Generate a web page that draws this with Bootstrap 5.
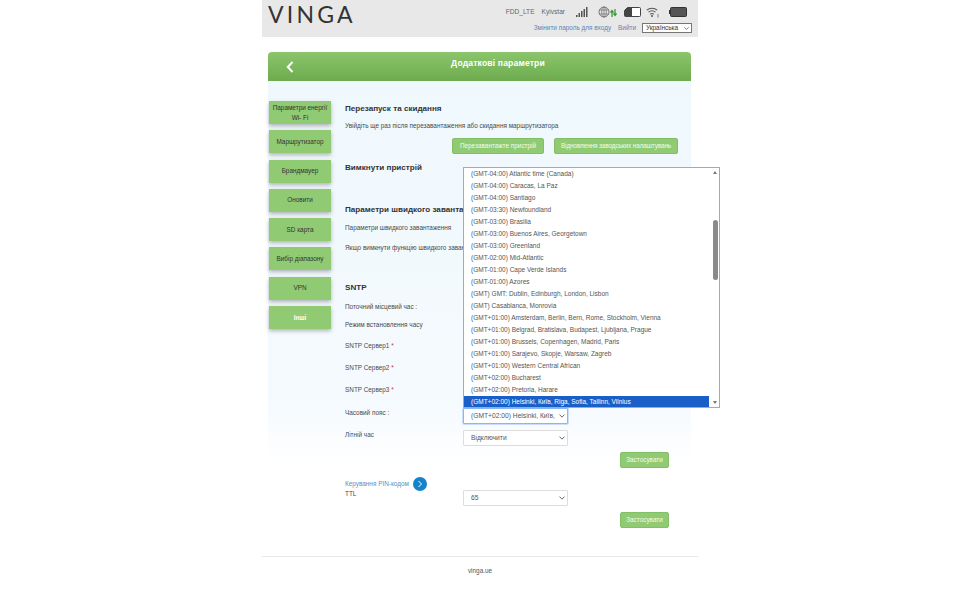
<!DOCTYPE html>
<html lang="uk">

<head>
  <meta charset="UTF-8" />
  <title>Додаткові параметри</title>
  <link href="https://cdn.jsdelivr.net/npm/bootstrap@5.3.0/dist/css/bootstrap.min.css" rel="stylesheet" />
  <style>
    body {
      font-family: "Liberation Sans", Arial, sans-serif;
      font-size: 6.4px;
      color: #4a4a4a;
      background: #fff;
      height: 600px;
      overflow: hidden;
    }

    .page-wrap {
      position: relative;
      width: 436px;
      margin-left: 262px;
    }

    .top-bar {
      height: 37px;
      background: #e8e8e8;
      padding: 0 6px;
    }

    .logo-text {
      font-family: Lato, "Liberation Sans", sans-serif;
      font-size: 23px;
      line-height: 28px;
      letter-spacing: 3.2px;
      color: #333;
      font-weight: 400;
    }

    .status-line {
      height: 23px;
      padding: 2px 0;
      color: #666;
      font-size: 6.6px;
    }

    .status-line svg {
      display: block;
    }

    .top-link {
      color: #5b86b5;
      text-decoration: none;
    }

    .form-select.lang-select {
      width: 50px;
      height: 10px;
      min-height: 0;
      font-size: 6.4px;
      line-height: 8px;
      padding: 0 8px 0 3px;
      border: 1px solid #767676;
      border-radius: 0;
      color: #333;
      background-size: 7px 5px;
      background-position: right 1px center;
    }

    .title-bar {
      width: 423px;
      height: 29px;
      margin: 15px 0 0 6px;
      padding: 0 16px 0 18px;
      border-radius: 4px 4px 0 0;
      background: linear-gradient(180deg, #8cc56c 0%, #6dab4e 100%);
      color: #fff;
      font-size: 8.6px;
      font-weight: 700;
    }

    .title-text {
      width: 100%;
      text-align: center;
      padding: 6px 0 0 27px;
      line-height: 10px;
      align-self: flex-start;
      letter-spacing: .15px;
    }

    .panel-area {
      width: 423px;
      margin-left: 6px;
      height: 459px;
      background: linear-gradient(180deg, #eff8fd 0%, #f5fafe 70%, #fff 84%);
    }

    .side-col {
      width: 62px;
      margin-left: 1px;
      padding-top: 20px;
      flex: none;
    }

    .side-btn {
      height: 23px;
      margin-bottom: 6.300px;
      background: #90cb74;
      box-shadow: 0 2px 4px rgba(0, 0, 0, .28);
      color: #333;
      text-align: center;
      line-height: 10px;
      padding: 0 2px;
    }

    .side-btn.side-on {
      color: #fff;
      font-weight: 700;
    }

    .main-col {
      margin-left: 14px;
      width: 335px;
      padding-top: 19px;
      flex: none;
    }

    .txt-row {
      height: 16px;
      line-height: 16px;
      white-space: nowrap;
    }

    /* the open list covers the right part of these rows */
    .txt-row.cut-row {
      width: 118px;
      overflow: hidden;
    }

    .txt-row.sec-title {
      line-height: 18px;
      font-size: 8.1px;
      font-weight: 700;
      color: #333;
    }

    .green-btn {
      height: 16px;
      padding: 0;
      font-size: 6.4px;
      line-height: 14px;
      color: #f2fbe9;
      background: #90cb74;
      border: 1px solid #83bf66;
      border-radius: 2px;
      white-space: nowrap;
    }

    .reboot-btn {
      width: 92px;
    }

    .reset-btn {
      width: 124px;
      letter-spacing: -.1px;
    }

    .apply-btn {
      width: 49px;
    }

    .field-row {
      height: 16px;
    }

    .field-label {
      width: 118px;
      line-height: 10px;
      flex: none;
    }

    .star {
      color: #c33;
    }

    .form-select.field-select {
      width: 105px;
      height: 16px;
      min-height: 0;
      padding: 0 11px 0 7px;
      font-size: 6.7px;
      line-height: 14px;
      color: #555;
      border-radius: 1px;
      border-color: #ddd;
      background-size: 8px 6px;
      background-position: right 1px center;
    }

    .form-select.field-select.select-open {
      border-color: #86b7fe;
      box-shadow: 0 0 0 1px rgba(13, 110, 253, .2);
    }

    .pin-link {
      color: #5b8fc0;
      text-decoration: none;
    }

    .pin-round {
      width: 14px;
      height: 14px;
      margin-left: 4px;
      border-radius: 50%;
      background: #1583c9;
    }

    .tz-list {
      position: absolute;
      left: 201px;
      top: 167px;
      width: 257px;
      height: 241px;
      font-size: 6.5px;
      background: #fff;
      border: 1px solid #a9a9a9;
      overflow: hidden;
    }

    .tz-item {
      height: 12px;
      line-height: 12px;
      padding-left: 7px;
      white-space: nowrap;
      color: #555;
    }

    .tz-item.tz-on {
      background: #1a5fc8;
      color: #fff;
    }

    .tz-scroll {
      position: absolute;
      right: 0;
      top: 0;
      bottom: 0;
      width: 10px;
      background: #fff;
    }

    .tz-thumb {
      position: absolute;
      left: 4px;
      top: 52px;
      width: 5px;
      height: 60px;
      border-radius: 3px;
      background: #8a8a8a;
    }

    .tz-arrow {
      position: absolute;
      left: 4px;
      width: 0;
      height: 0;
      border-left: 2.500px solid transparent;
      border-right: 2.500px solid transparent;
    }

    .foot-bar {
      position: absolute;
      top: 556px;
      left: 0;
      width: 100%;
      border-top: 1px solid #e8e8e8;
      text-align: center;
      padding-top: 9px;
      line-height: 9px;
      color: #555;
    }
  </style>
</head>

<body>
  <div class="page-wrap">
    <div class="top-bar d-flex justify-content-between">
      <div class="logo-text">VINGA</div>
      <div>
        <div class="status-line d-flex align-items-center justify-content-end">
          <span style="margin-right:7px">FDD_LTE</span>
          <span style="margin-right:10px">Kyivstar</span>
          <svg width="13" height="12" viewBox="0 0 13 12" style="margin-right:10px">
            <path d="M1 9h1.500v2H1zM3.500 7H5v4H3.500zM6 5h1.500v6H6zM8.500 3H10v8H8.500zM11 1h1.500v10H11z" fill="#555" />
          </svg>
          <svg width="19" height="12" viewBox="0 0 19 12" style="margin-right:7px">
            <circle cx="6" cy="6" r="5" fill="none" stroke="#777" />
            <ellipse cx="6" cy="6" rx="2.300" ry="5" fill="none" stroke="#777" stroke-width=".8" />
            <path d="M1 4h10M1 8h10M6 1v10" stroke="#777" stroke-width=".8" />
            <path d="M14 11V5M12.500 6.500 14 4.500l1.500 2" stroke="#3c9a3c" stroke-width="1.300" fill="none" />
            <path d="M17 3v6M15.500 7.500 17 9.500l1.500-2" stroke="#3c9a3c" stroke-width="1.300" fill="none" />
          </svg>
          <svg width="17" height="10" viewBox="0 0 17 10" style="margin-right:5px">
            <path d="M3.500.5h12a1 1 0 0 1 1 1v7a1 1 0 0 1-1 1h-14a1 1 0 0 1-1-1V3.500z" fill="#fff" stroke="#444" />
            <path d="M3.500.5H8v9H1.500a1 1 0 0 1-1-1V3.500z" fill="#444" />
          </svg>
          <svg width="14" height="12" viewBox="0 0 14 12" style="margin-right:9px">
            <path d="M.8 4.200a8 8 0 0 1 10.400 0M2.500 6.200a5.500 5.500 0 0 1 7 0M4.200 8.200a3 3 0 0 1 3.600 0" fill="none" stroke="#555" stroke-width="1.100" />
            <circle cx="6" cy="10" r="1" fill="#555" />
            <path d="M12 8v3.500" stroke="#666" stroke-width=".8" />
          </svg>
          <svg width="18" height="10" viewBox="0 0 18 10" style="margin-right:5px">
            <rect x="1.500" y=".5" width="16" height="9" rx="1" fill="#555" stroke="#333" />
            <rect x="0" y="3" width="1.500" height="4" fill="#333" />
          </svg>
        </div>
        <div class="d-flex align-items-center justify-content-end">
          <a class="top-link" href="#" style="margin-right:7px">Змінити пароль для входу</a>
          <a class="top-link" href="#" style="margin-right:6px">Вийти</a>
          <select class="form-select lang-select">
            <option>Українська</option>
          </select>
        </div>
      </div>
    </div>

    <div class="title-bar d-flex align-items-center">
      <svg width="8" height="12" viewBox="0 0 8 12" class="flex-shrink-0">
        <path d="M6.500 1 1.800 6l4.700 5" fill="none" stroke="#fff" stroke-width="2" />
      </svg>
      <div class="title-text">Додаткові параметри</div>
    </div>

    <div class="panel-area d-flex">
      <div class="side-col">
        <div class="side-btn d-flex align-items-center justify-content-center">Параметри енергії Wi- Fi</div>
        <div class="side-btn d-flex align-items-center justify-content-center">Маршрутизатор</div>
        <div class="side-btn d-flex align-items-center justify-content-center">Брандмауер</div>
        <div class="side-btn d-flex align-items-center justify-content-center">Оновити</div>
        <div class="side-btn d-flex align-items-center justify-content-center">SD карта</div>
        <div class="side-btn d-flex align-items-center justify-content-center">Вибір діапазону</div>
        <div class="side-btn d-flex align-items-center justify-content-center">VPN</div>
        <div class="side-btn side-on d-flex align-items-center justify-content-center">Інші</div>
      </div>

      <div class="main-col">
        <div class="txt-row sec-title">Перезапуск та скидання</div>
        <div class="txt-row" style="margin-top:2px">Увійдіть ще раз після перезавантаження або скидання маршрутизатора</div>
        <div class="d-flex justify-content-end" style="margin-top:4px;padding-right:2px;gap:10px">
          <button class="btn green-btn reboot-btn">Перезавантажте пристрій</button>
          <button class="btn green-btn reset-btn">Відновлення заводських налаштувань</button>
        </div>
        <div class="txt-row sec-title" style="margin-top:5px">Вимкнути пристрій</div>
        <div class="txt-row sec-title cut-row" style="margin-top:26px">Параметри швидкого завантаження</div>
        <div class="txt-row" style="margin-top:3px">Параметри швидкого завантаження</div>
        <div class="txt-row cut-row" style="margin-top:4px">Якщо вимкнути функцію швидкого завантаження</div>
        <div class="txt-row sec-title" style="margin-top:23px">SNTP</div>
        <div class="txt-row" style="margin-top:4px">Поточний місцевий час :</div>
        <div class="txt-row" style="margin-top:2px">Режим встановлення часу</div>
        <div class="txt-row" style="margin-top:5px">SNTP Сервер1 <span class="star">*</span></div>
        <div class="txt-row" style="margin-top:6px">SNTP Сервер2 <span class="star">*</span></div>
        <div class="txt-row" style="margin-top:6px">SNTP Сервер3 <span class="star">*</span></div>
        <div class="field-row d-flex" style="margin-top:10px">
          <div class="field-label">Часовий пояс :</div>
          <select class="form-select field-select select-open">
            <option>(GMT+02:00) Helsinki, Київ, Riga, Sofia, Tallinn, Vilnius</option>
          </select>
        </div>
        <div class="field-row d-flex" style="margin-top:6px">
          <div class="field-label">Літній час</div>
          <select class="form-select field-select">
            <option>Відключити</option>
          </select>
        </div>
        <div class="d-flex justify-content-end" style="margin-top:6px;padding-right:11px">
          <button class="btn green-btn apply-btn">Застосувати</button>
        </div>
        <div class="d-flex align-items-center" style="margin-top:8px;height:16px">
          <a class="pin-link" href="#">Керування PIN-кодом</a>
          <span class="pin-round d-flex align-items-center justify-content-center">
            <svg width="6" height="8" viewBox="0 0 6 8">
              <path d="M1.500 1 4.500 4l-3 3" fill="none" stroke="#fff" stroke-width="1" />
            </svg>
          </span>
        </div>
        <div class="field-row d-flex" style="margin-top:-2px">
          <div class="field-label" style="line-height:8px">TTL</div>
          <select class="form-select field-select">
            <option>65</option>
          </select>
        </div>
        <div class="d-flex justify-content-end" style="margin-top:6px;padding-right:11px">
          <button class="btn green-btn apply-btn">Застосувати</button>
        </div>
      </div>
    </div>

    <div class="tz-list">
      <div class="tz-item">(GMT-04:00) Atlantic time (Canada)</div>
      <div class="tz-item">(GMT-04:00) Caracas, La Paz</div>
      <div class="tz-item">(GMT-04:00) Santiago</div>
      <div class="tz-item">(GMT-03:30) Newfoundland</div>
      <div class="tz-item">(GMT-03:00) Brasilia</div>
      <div class="tz-item">(GMT-03:00) Buenos Aires, Georgetown</div>
      <div class="tz-item">(GMT-03:00) Greenland</div>
      <div class="tz-item">(GMT-02:00) Mid-Atlantic</div>
      <div class="tz-item">(GMT-01:00) Cape Verde Islands</div>
      <div class="tz-item">(GMT-01:00) Azores</div>
      <div class="tz-item">(GMT) GMT: Dublin, Edinburgh, London, Lisbon</div>
      <div class="tz-item">(GMT) Casablanca, Monrovia</div>
      <div class="tz-item">(GMT+01:00) Amsterdam, Berlin, Bern, Rome, Stockholm, Vienna</div>
      <div class="tz-item">(GMT+01:00) Belgrad, Bratislava, Budapest, Ljubljana, Prague</div>
      <div class="tz-item">(GMT+01:00) Brussels, Copenhagen, Madrid, Paris</div>
      <div class="tz-item">(GMT+01:00) Sarajevo, Skopje, Warsaw, Zagreb</div>
      <div class="tz-item">(GMT+01:00) Western Central African</div>
      <div class="tz-item">(GMT+02:00) Bucharest</div>
      <div class="tz-item">(GMT+02:00) Pretoria, Harare</div>
      <div class="tz-item tz-on">(GMT+02:00) Helsinki, Київ, Riga, Sofia, Tallinn, Vilnius</div>
      <div class="tz-scroll">
        <div class="tz-arrow" style="top:3px;border-bottom:3px solid #777"></div>
        <div class="tz-thumb"></div>
        <div class="tz-arrow" style="bottom:3px;border-top:3px solid #777"></div>
      </div>
    </div>

    <div class="foot-bar">vinga.ue</div>
  </div>
  <script src="https://cdn.jsdelivr.net/npm/bootstrap@5.3.0/dist/js/bootstrap.bundle.min.js"></script>
</body>

</html>
